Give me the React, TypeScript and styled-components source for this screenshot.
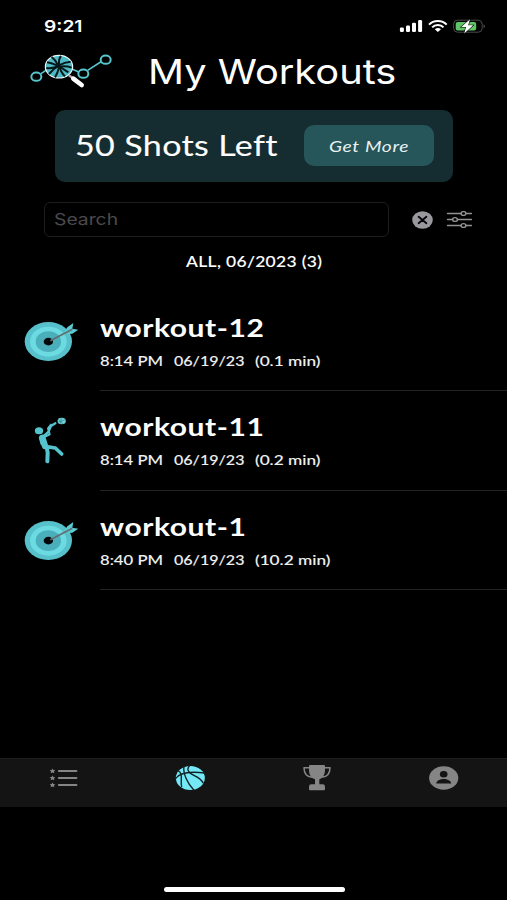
import React from "react";
import styled, { createGlobalStyle } from "styled-components";

const GlobalStyle = createGlobalStyle`
  * { box-sizing: border-box; }
  body { margin: 0; background: #000; }
`;

const ui = `Inter, "Liberation Sans", sans-serif`;
const body = `Lato, "Open Sans", sans-serif`;

const Screen = styled.main`
  width: 507px;
  height: 900px;
  display: flex;
  flex-direction: column;
  background: #000;
  color: #fff;
  overflow: hidden;
`;

/* Wide lettering: the glyphs are stretched horizontally from their left edge. */
const Wide = styled.span<{ $x: number }>`
  display: block;
  white-space: nowrap;
  transform: scaleX(${(p) => p.$x});
  transform-origin: left center;
`;

const StatusBar = styled.div`
  height: 48px;
  padding: 4px 20px 0 44px;
  display: flex;
  align-items: center;
  justify-content: space-between;
`;

const Clock = styled(Wide)`
  font: 600 16px/44px ${ui};
`;

const Header = styled.header`
  height: 46px;
  padding-left: 30px;
  display: flex;
  align-items: center;
`;

const Title = styled(Wide)`
  margin-left: 34px;
  padding-top: 1px;
  font: 400 34.4px/46px ${ui};
`;

const Banner = styled.section`
  width: 398px;
  height: 72px;
  margin: 15.5px 0 0 55px;
  padding: 0 19.5px 0 20px;
  display: flex;
  align-items: center;
  justify-content: space-between;
  background: #152d31;
  border-radius: 10px;
`;

const Remaining = styled(Wide)`
  padding-bottom: 2px;
  font: 400 28px/40px ${body};
  letter-spacing: 0.3px;
  -webkit-text-stroke: 0.1px currentColor;
`;

const MoreButton = styled.button`
  width: 130px;
  height: 41px;
  padding: 0 0 0 25px;
  border: 0;
  border-radius: 10px;
  background: #26555a;
  color: #e9f1f1;
  text-align: left;
  font: italic 400 15px/38px ${body};
  letter-spacing: 0.5px;
`;

const SearchRow = styled.div`
  height: 35px;
  margin: 20.5px 0 0 44px;
  display: flex;
  align-items: center;
`;

const SearchBox = styled.div`
  width: 345px;
  height: 35px;
  margin-right: 23px;
  padding-left: 9px;
  border: 1px solid #1d1d1e;
  border-radius: 6px;
  color: #4a4a4c;
  font: 400 16.5px/33px ${ui};
`;

const FilterIcon = styled.svg`
  margin-left: 13px;
`;

const Summary = styled.div`
  height: 55.2px;
  padding: 9.5px 0 0 186px;
  font: 500 14.3px/30px ${body};
  letter-spacing: 0.28px;
  -webkit-text-stroke: 0.1px currentColor;
`;

const Row = styled.article`
  height: 99.3px;
  display: grid;
  grid-template-columns: 100px 1fr;
`;

const RowArt = styled.div<{ $left: number; $top: number }>`
  padding: ${(p) => p.$top}px 0 0 ${(p) => p.$left}px;
`;

const RowText = styled.div`
  padding-top: 20px;
  border-bottom: 1px solid #222223;
`;

const Name = styled(Wide)`
  font: 700 24px/32px ${body};
  letter-spacing: 0.45px;
`;

const Meta = styled.div`
  display: grid;
  grid-template-columns: 74px 80.5px auto;
  margin-top: 4px;
  color: #f0f0f0;
  font: 500 13.9px/25px ${body};
  -webkit-text-stroke: 0.1px currentColor;
`;

const Spacer = styled.div`
  flex: 1;
`;

const TabBar = styled.nav`
  height: 49.5px;
  margin-bottom: 79.5px;
  padding-bottom: 10px;
  display: grid;
  grid-template-columns: repeat(4, 1fr);
  place-items: center;
  background: #141414;
  border-top: 1px solid #1e1e1e;
`;

const HomeIndicator = styled.div`
  width: 181px;
  height: 5.5px;
  margin: 0 0 8px 163.5px;
  flex: none;
  border-radius: 3px;
  background: #fff;
`;

const StatusIcons = () => (
  <svg width="88" height="18" viewBox="0 0 88 18" fill="#fff">
    <rect x="0.9" y="10.4" width="4" height="4.6" rx="1.3" />
    <rect x="7" y="8.4" width="4" height="6.6" rx="1.3" />
    <rect x="13" y="5.7" width="4" height="9.3" rx="1.3" />
    <rect x="19.1" y="3" width="4" height="12" rx="1.3" />
    <g fill="none" stroke="#fff" strokeWidth="2">
      <path d="M30 7.6C34.5 2.7 43.2 2.7 47.7 7.6" />
      <path d="M33.2 10.3C36 7.2 41.7 7.2 44.5 10.3" />
    </g>
    <path d="M35.8 12.2Q38.9 9.6 42 12.2L38.9 15Z" />
    <rect x="54.6" y="3.2" width="28.6" height="12" rx="4" fill="none" stroke="#4b4b4b" />
    <path d="M84.5 7.3Q87.5 9.2 84.5 11.2Z" fill="#4b4b4b" />
    <rect x="56.7" y="5" width="20.5" height="8.5" rx="2" fill="#5fc466" />
    <path d="M71 2.3L62.2 10H67L65.2 16.4L74.2 8.3H69.2Z" stroke="#000" strokeWidth="1.1" paintOrder="stroke" />
  </svg>
);

const Logo = () => (
  <svg width="84" height="36.7" viewBox="90 160 252 110" fill="none">
    <g stroke="#58c5cc" strokeWidth="5">
      <path d="M123 222L141 210M216 208L236 217M263 212L303 186" />
      <ellipse cx="109" cy="231" rx="15" ry="12.5" strokeWidth="6" />
      <ellipse cx="250" cy="222" rx="15" ry="12.5" strokeWidth="6" />
      <ellipse cx="317" cy="180" rx="15" ry="12.5" strokeWidth="6" />
    </g>
    <ellipse cx="177" cy="201" rx="41" ry="34" fill="#4cb9c4" stroke="#eefafa" strokeWidth="3.5" />
    <g stroke="#061719" strokeWidth="6">
      <path d="M141 188C163 190 185 204 205 218" />
      <path d="M212 186C184 188 161 206 147 223" />
      <path d="M183 169C171 183 178 214 195 230" />
      <path d="M139 205C153 207 164 205 176 199" />
      <path d="M155 172C168 182 171 192 176 200" />
      <path d="M165 233C172 222 175 212 177 203" />
      <path d="M179 201C192 199 204 200 215 204" />
    </g>
    <path d="M207 227L217 234" stroke="#bda7b0" strokeWidth="7" />
    <path d="M220 237L245 256" stroke="#fff" strokeWidth="14" strokeLinecap="round" />
  </svg>
);

const ClearIcon = () => (
  <svg width="21" height="18" viewBox="0 0 21 18">
    <ellipse cx="10.5" cy="9" rx="10.3" ry="8.7" fill="#99999d" />
    <path d="M6.6 5.8L14.4 12.2M14.4 5.8L6.6 12.2" stroke="#050505" strokeWidth="1.8" strokeLinecap="round" />
  </svg>
);

const Sliders = () => (
  <FilterIcon width="26" height="18" viewBox="-0.5 0.5 26 18" fill="none" stroke="#929294" strokeWidth="1.4">
    <path d="M1 3H14.5M19.5 3H25M1 9H6M11 9H25M1 15H14.5M19.5 15H25" strokeLinecap="round" />
    <ellipse cx="17" cy="3" rx="2.4" ry="1.9" />
    <ellipse cx="8.5" cy="9" rx="2.4" ry="1.9" />
    <ellipse cx="17" cy="15" rx="2.4" ry="1.9" />
  </FilterIcon>
);

const Target = () => (
  <svg width="56.7" height="43.3" viewBox="40 60 170 130">
    <ellipse cx="116" cy="124.5" rx="71" ry="58.5" fill="#57c1cb" />
    <ellipse cx="116" cy="125" rx="55" ry="45" fill="#6cdbe1" />
    <ellipse cx="116" cy="125" rx="38" ry="31" fill="#4aafba" />
    <ellipse cx="116" cy="125" rx="14" ry="11.5" fill="#020608" />
    <path d="M164 95L173 82L191 69L188 86L206 89L188 101L174 102Z" fill="#5acbd4" />
    <path d="M122 122L188 88" stroke="#636d70" strokeWidth="5" />
  </svg>
);

const Shooter = () => (
  <svg width="40" height="50" viewBox="60 30 120 150" fill="none" stroke="#55c3ce" strokeLinecap="round" strokeLinejoin="round">
    <ellipse cx="87" cy="77" rx="12.5" ry="10.5" fill="#55c3ce" stroke="none" />
    <path d="M97 98L105 123" strokeWidth="19" />
    <path d="M100 94L115 81L123 63L136 55" strokeWidth="7" />
    <path d="M103 96L119 88L114 70L123 59" strokeWidth="6" />
    <path d="M89 98L94 117" strokeWidth="5" />
    <path d="M110 126L113 143L112 169" strokeWidth="12" />
    <path d="M108 125L136 129L155 147" strokeWidth="11" />
    <ellipse cx="155" cy="48" rx="12.5" ry="10" fill="#6bcfd6" stroke="none" />
    <path d="M146 44L158 55M154 39L152 56M165 44L146 51" stroke="#2b6d75" strokeWidth="1.5" />
  </svg>
);

const ListIcon = () => (
  <svg width="30" height="26" viewBox="-0.7 0 30 26" fill="#858585">
    {[6, 13, 20].map((y) => (
      <g key={y} transform={`translate(0 ${y})`}>
        <path d="M3.8 -2.6L4.7 -0.9L6.6 -0.7L5.3 0.6L5.6 2.3L3.8 1.6L2 2.3L2.3 0.6L1 -0.7L2.9 -0.9Z" />
        <rect x="9.2" y="-0.95" width="19.5" height="1.9" rx="0.9" />
      </g>
    ))}
  </svg>
);

const BallIcon = () => (
  <svg width="30" height="26" viewBox="525 59 90 78">
    <ellipse cx="571" cy="98" rx="43.5" ry="36" fill="#74e8f7" />
    <g fill="none" stroke="#122326" strokeWidth="4.2">
      <path d="M526 101C534 86 562 76 615 83" />
      <path d="M552 62C548 84 562 113 582 135" />
      <path d="M570 60C561 68 562 76 570 83C581 92 602 95 610 114" />
      <path d="M534 76C551 84 540 106 545 125" />
    </g>
  </svg>
);

const TrophyIcon = () => (
  <svg width="30" height="28" viewBox="147 56 90 84" fill="#858585">
    <path d="M171 59H213Q216 59 216 62V73C216 91 207 99 199 102V117H209Q216 117 216 124V132Q216 135 213 135H171Q168 135 168 132V124Q168 117 175 117H186V102C176 98 168 91 168 73V62Q168 59 171 59Z" />
    <path d="M169 67H153C153 84 161 94 177 96M215 67H231C231 84 223 94 207 96" fill="none" stroke="#858585" strokeWidth="4.5" strokeLinejoin="round" />
  </svg>
);

const ProfileIcon = () => (
  <svg width="30" height="26" viewBox="0.5 0 30 26">
    <ellipse cx="15.2" cy="13" rx="14.6" ry="11.8" fill="#858585" />
    <ellipse cx="15.2" cy="9.2" rx="3.8" ry="3.3" fill="#141414" />
    <path d="M7.7 18.6C8.3 12.6 22.1 12.6 22.7 18.6Z" fill="#141414" />
  </svg>
);

const workouts = [
  { name: "workout-12", time: "8:14 PM", length: "(0.1 min)", kind: "target" },
  { name: "workout-11", time: "8:14 PM", length: "(0.2 min)", kind: "shooter" },
  { name: "workout-1", time: "8:40 PM", length: "(10.2 min)", kind: "target" },
];

export default function App() {
  return (
    <Screen>
      <GlobalStyle />
      <StatusBar>
        <Clock $x={1.2}>9:21</Clock>
        <StatusIcons />
      </StatusBar>
      <Header>
        <Logo />
        <Title $x={1.157}>My Workouts</Title>
      </Header>
      <Banner>
        <Remaining $x={1.215}>50 Shots Left</Remaining>
        <MoreButton>
          <Wide $x={1.28}>Get More</Wide>
        </MoreButton>
      </Banner>
      <SearchRow>
        <SearchBox>
          <Wide $x={1.17}>Search</Wide>
        </SearchBox>
        <ClearIcon />
        <Sliders />
      </SearchRow>
      <Summary>
        <Wide $x={1.22}>ALL, 06/2023 (3)</Wide>
      </Summary>
      {workouts.map((w) => (
        <Row key={w.name}>
          {w.kind === "target" ? (
            <RowArt $left={23.3} $top={28}><Target /></RowArt>
          ) : (
            <RowArt $left={30} $top={23.5}><Shooter /></RowArt>
          )}
          <RowText>
            <Name $x={1.25}>{w.name}</Name>
            <Meta>
              <Wide $x={1.2}>{w.time}</Wide>
              <Wide $x={1.155}>06/19/23</Wide>
              <Wide $x={1.24}>{w.length}</Wide>
            </Meta>
          </RowText>
        </Row>
      ))}
      <Spacer />
      <TabBar>
        <ListIcon />
        <BallIcon />
        <TrophyIcon />
        <ProfileIcon />
      </TabBar>
      <HomeIndicator />
    </Screen>
  );
}
